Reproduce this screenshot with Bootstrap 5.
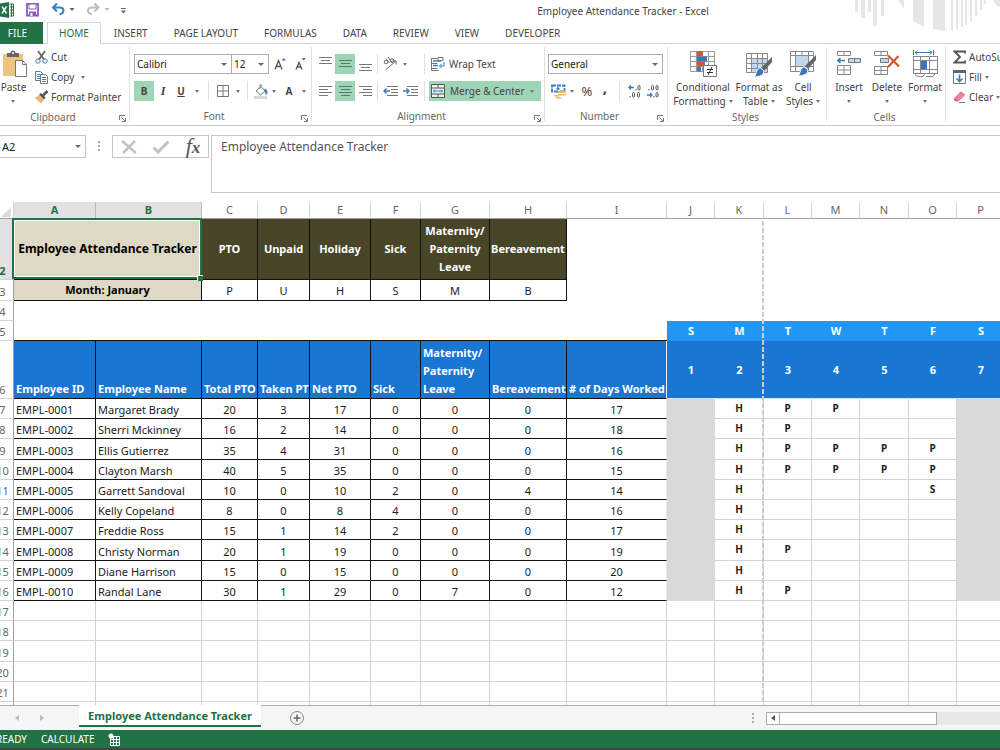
<!DOCTYPE html>
<html lang="en">
<head>
<meta charset="utf-8">
<meta name="viewport" content="width=device-width, initial-scale=1">
<title>Employee Attendance Tracker - Excel</title>
<link href="https://cdn.jsdelivr.net/npm/bootstrap@5.3.0/dist/css/bootstrap.min.css" rel="stylesheet">
<style>
:root{--xl:#217346;--hot:#9fd5b7;--ink:#444;--rule:#d5d5d5}
html,body{height:100%}
body{font:10px/14px "Noto Sans","Open Sans",sans-serif;color:var(--ink);background:#fff;overflow:hidden}
svg{display:block;flex:none}
button{font:inherit;color:inherit;background:none;border:0;padding:0}
/* title bar */
.titlebar{height:22px;flex:none}
.titlebar h1{font:10px/22px "Noto Sans",sans-serif;margin:0;padding-left:116px}
.quick{width:130px}
.deco{right:0;top:0}
/* ribbon tabs */
.rtabs{height:22px;flex:none;border-bottom:1px solid var(--rule)}
.rtabs a{color:var(--ink);text-decoration:none;line-height:20px;padding:0 12px;height:22px;border:1px solid transparent;border-bottom:0}
.rtabs a.file-tab{background:var(--xl);color:#fff;width:43px;padding:0;text-align:center;text-indent:-8px}
.rtabs a.home-tab{color:var(--xl);background:#fff;border-color:var(--rule);margin-left:4px;padding:0 11px}
/* ribbon */
.ribbon{height:82px;flex:none;border-bottom:1px solid #c8c8c8;overflow:hidden}
.rgroup{position:relative;flex:none;display:flex;flex-direction:column}
.rgroup::after{content:"";position:absolute;right:0;top:3px;bottom:4px;border-right:1px solid #e1e1e1}
.rbody{height:65px}
.rlabel{line-height:18px;text-align:center;color:#666;padding-right:14px}
.g-clip{width:130px}.g-clip .rlabel{padding-right:24px}
.g-font{width:182px}.g-align{width:233px}.g-num{width:123px}.g-styles{width:159px}.g-cells{width:119px}.g-edit{width:180px}
.g-styles .rlabel,.g-cells .rlabel{padding-right:4px}
.g-align .rbody,.g-num .rbody,.g-cells .rbody{padding-left:3px}
.g-styles .rbody{padding-left:4px}
.g-edit .rbody{padding-left:7px}
.g-edit .rbody,.cmds{padding-top:3px}
.launch{position:absolute;right:4px;bottom:3px}
.tworows{padding-top:10px;display:flex;flex-direction:column;gap:7px}
.trow{display:flex;height:20px;align-items:center}
.tb{height:20px;display:flex;align-items:center;justify-content:center;flex:none}
.tb.hot{background:var(--hot)}
.w4{width:4px}.w8{width:8px}.w10{width:10px}.w14{width:14px}.w18{width:18px}.w20{width:20px}.w22{width:22px}
.t-ital{font:italic 700 12px "Liberation Serif",serif}
.t-pct{font-size:13px}
.t-comma{font-size:15px;padding-bottom:8px}
.vsep{align-self:stretch;display:flex;justify-content:center;flex:none}
.vsep::before{content:"";border-left:1px solid #e1e1e1}
.caret{width:0;height:0;border:2px solid transparent;border-top:3px solid #777;border-bottom:0;flex:none}
.combo{font:11px/18px "Noto Sans",sans-serif;color:#222;height:20px;border:1px solid #ababab;border-radius:0;padding:0 2px;appearance:none;-webkit-appearance:none;background:#fff url("data:image/svg+xml,%3Csvg xmlns='http://www.w3.org/2000/svg' width='6' height='3'%3E%3Cpath d='M0 0h6L3 3z' fill='%23666'/%3E%3C/svg%3E") no-repeat right 4px center}
.c-face{width:98px}.c-size{width:38px;margin-left:-1px}.c-num{width:115px}
.trow .combo{font-size:10px}
.small-cmd{height:20px;display:flex;align-items:center;gap:3px;white-space:nowrap}
.big{display:flex;flex-direction:column;align-items:center;gap:2px;padding-top:6px;text-align:center;flex:none;white-space:nowrap}
.big svg{height:28px}
.big .line2{height:14px;display:flex;align-items:center;justify-content:center;gap:3px}
.b-cond{width:62px}.b-table{width:50px}.b-cell{width:38px}
.merge{width:112px;background:var(--hot);padding-left:2px;gap:5px;justify-content:flex-start}
/* formula bar */
.fbar{height:76px;flex:none;padding-top:9px}
.namebox{width:86px;height:23px;border:1px solid #c6c6c6;border-left:0;padding:0 2px}
.dots{width:26px;padding-top:6px}
.fbtns{width:97px;height:23px;border:1px solid #c6c6c6}
.fx{font:italic 22px/20px "Liberation Serif",serif;color:#555}
.fx span{font-size:17px;font-weight:700}
.ftext{height:58px;margin-left:2px;border:1px solid #c6c6c6;border-right:0;font:12px/18px "Noto Sans",sans-serif;color:#555;padding:2px 9px;resize:none;border-radius:0;min-width:0}
/* sheet */
.sheetwrap{flex:1 1 0;min-height:0;overflow:hidden;position:relative}
.grid{table-layout:fixed;border-collapse:separate;border-spacing:0;width:1013px;margin-left:-8px;font-size:11px;line-height:18px;color:#1c1c1c}
.grid th,.grid td{padding:0;overflow:hidden;white-space:nowrap;vertical-align:bottom;text-align:center;border:0 solid #d4d4d4;font-weight:400}
.grid thead th{height:17px;line-height:16px;color:#666;border-width:0 1px 1px 0;border-color:#d4d4d4;border-bottom-color:#a0a0a0}
.grid thead th.sel,.grid th.rowsel{background:#e1e1e1;color:var(--xl);font-weight:700}
.grid thead th.sel{border-bottom-color:var(--xl);border-right-color:#bbb}
.grid tbody th{color:#666;border-width:0 1px 1px 0;border-right-color:#a0a0a0;line-height:16px}
.r2{height:61px}.r3{height:21px}.r4,.r5{height:20px}.r6{height:58px}
.rows tr{height:20px;line-height:16px}.rows tr:nth-child(5n+3){height:21px}
.rows td{border-width:0 1px 1px 0}
.grid .bk{border:0 solid #111;border-width:0 1px 1px 0}
.grid .lt{text-align:left;padding-left:2px}
.grid td.tan{background:#ddd9c4;font-weight:700;color:#000;vertical-align:middle}
.grid td.picked{position:relative;overflow:visible;font-size:12px}
.picked::after{content:"";position:absolute;inset:-1px -1px 0 -2px;border:2px solid var(--xl);box-shadow:inset 0 0 0 1px #fff}
.picked i{position:absolute;right:-2px;bottom:-2px;width:6px;height:6px;background:var(--xl);border:1px solid #fff;border-width:1px 0 0 1px;z-index:1}
.grid td.olive{background:#494529;color:#fff;font-weight:700;vertical-align:middle;white-space:normal}
.grid td.blue{background:#1976d2;color:#fff;font-weight:700}
.grid td.wrap2{white-space:normal}
.grid td.sky{background:#2196f3;color:#fff;font-weight:700;vertical-align:middle}
.grid td.topline{border-bottom:1px solid #111}
.grid td.num{background:#1976d2;color:#fff;font-weight:700;vertical-align:middle;border-bottom:1px solid #d4e6f7}
.grid td.att{font-weight:700;vertical-align:top;font-size:10px;line-height:18px}
.grid td.off{background:#d9d9d9;border-color:#d9d9d9}
.grid td.edge{border-right-color:#e8eef5}
.pagebreak{left:762px;top:19px;bottom:2px;width:2px;background:repeating-linear-gradient(#ccc 0 5px,transparent 5px 7px)}
/* sheet tabs and status */
.stabs{height:25px;flex:none;background:#f5f5f5;border-top:1px solid #ababab}
.stab{margin-top:-1px;height:22px;width:182px;background:#fff;border-bottom:2px solid var(--xl);font:700 11px/22px "Noto Sans",sans-serif;color:var(--xl);text-align:center}
.navs{width:79px;padding-left:15px;gap:21px}
.scroller{gap:12px}
.track{width:234px;height:13px;background:#e8e8e8}
.track .step{width:14px;border:1px solid #ababab;background:#fff}
.track .thumb{width:157px;border:1px solid #ababab;border-left-width:0;background:#fff}
.status{height:20px;flex:none;background:var(--xl);color:#fff;border-bottom:2px solid #444;gap:14px;margin-left:-4px}
</style>
</head>
<body class="d-flex flex-column">
<header class="titlebar d-flex position-relative">
  <div class="quick d-flex">
    <svg width="130" height="22" fill="none">
      <path d="M0 3.500 9 2v16l-9-1.500z" fill="#217346"/><path d="M9.500 4h4v12h-4" stroke="#217346" fill="#fff"/><path d="M10 7h3M10 10h3M10 13h3M11.500 4v12" stroke="#217346"/><path d="M2 6.500l4.500 7M6.500 6.500 2 13.500" stroke="#fff" stroke-width="1.500"/>
      <path d="M27 4h11v11.500H27z" stroke="#8e5bb5" stroke-width="1.800"/><path d="M29 4h7v5h-7z" fill="#fff" stroke="#8e5bb5"/><path d="M29 11.500h7v4h-7z" fill="#8e5bb5"/><path d="M30.500 13h2v3h-2z" fill="#fff"/>
      <path d="M57 3.500 53 7.500l4 4M53.500 7.500H60c5 .5 4.500 6-.5 6.800" stroke="#3b7cc0" stroke-width="2"/>
      <path d="M69.500 8h5l-2.500 3z" fill="#666"/>
      <path d="M94.500 3.500l4 4-4 4M98 7.500H91.500c-5 .5-4.500 6 .5 6.800" stroke="#bdbdbd" stroke-width="2"/>
      <path d="M104.500 8h5l-2.500 3z" fill="#bbb"/><path d="M121 8.500h5" stroke="#666"/><path d="M121 10.500h5l-2.500 3z" fill="#666"/>
    </svg>
  </div>
  <h1 class="flex-grow-1 text-center">Employee Attendance Tracker - Excel</h1>
  <svg class="deco position-absolute" width="147" height="32" fill="#e6e6e6">
    <path d="M2 0h3v12H2zM8 0h4v18H8zM15 0h3v12h-3zM20 0h4v26h-4zM28 0h3v16h-3zM45 0h6v9zM60 0h11v27l-11-6zM80 0h12v31l-12-2zM98 0h2v30h-2zM103 0h2v29h-2zM108 0h2v27h-2zM112 0h2v25h-2zM117 0h2v21h-2zM122 0h2v16h-2zM127 0h2v10h-2zM131 0h2v4h-2zM140 0h7v7q-4-1-7-7z"/>
  </svg>
</header>

<nav class="rtabs d-flex">
  <a href="#" class="file-tab">FILE</a><a href="#" class="home-tab">HOME</a><a href="#">INSERT</a><a href="#">PAGE LAYOUT</a><a href="#">FORMULAS</a><a href="#">DATA</a><a href="#">REVIEW</a><a href="#">VIEW</a><a href="#">DEVELOPER</a>
</nav>

<section class="ribbon d-flex">
  <div class="rgroup g-clip">
    <div class="rbody d-flex">
      <button class="big pe-2">
        <svg width="27" height="28" fill="none"><path d="M3 4h20v22H3z" fill="#edc47e"/><path d="M7 3h3.500q0-2.500 2.500-2.500T15.500 3H19v4H7z" fill="#666"/><circle cx="13" cy="3" r="1" fill="#fff"/><path d="M15.500 10.500h7l4 4v12h-11z" fill="#fff" stroke="#777"/><path d="M22.500 10.500v4h4" stroke="#777"/></svg>
        <span>Paste<span class="line2"><i class="caret"></i></span></span>
      </button>
      <div class="cmds">
        <button class="small-cmd"><svg width="13" height="14" fill="none"><path d="M3 1l6 8.500M10 1 4 9.500" stroke="#666" stroke-width="1.800"/><circle cx="3" cy="11" r="2.200" stroke="#3b7cc0"/><circle cx="10" cy="11" r="2.200" stroke="#3b7cc0"/></svg>Cut</button>
        <button class="small-cmd"><svg width="13" height="14" fill="none"><path d="M.5 1.500h5l2 2v7h-7z" fill="#fff" stroke="#777"/><path d="M2 4.500h3M2 6.500h3M2 8.500h3" stroke="#3b7cc0"/><path d="M5.500 4.500h5l2 2v7h-7z" fill="#fff" stroke="#777"/><path d="M7 7.500h4M7 9.500h4M7 11.500h4" stroke="#3b7cc0"/></svg>Copy<i class="caret ms-1"></i></button>
        <button class="small-cmd"><svg width="13" height="14" fill="none"><path d="M0 8l4-3 5 5-3 3.500z" fill="#edb868"/><path d="M4 4.500 6 3l4.500 4.500L9 9.500z" fill="#555"/><path d="M8 5.500 12.500 1" stroke="#555" stroke-width="2.500"/></svg>Format Painter</button>
      </div>
    </div>
    <div class="rlabel">Clipboard</div>
    <svg class="launch" width="7" height="7" fill="none" stroke="#777"><path d="M.5 5V.5H6M2.500 2.500l3.500 3.500M6.500 3v3.500H3"/></svg>
  </div>

  <div class="rgroup g-font">
    <div class="rbody tworows ps-1">
      <div class="trow">
        <select class="combo c-face" aria-label="Font"><option>Calibri</option></select><select class="combo c-size" aria-label="Font size"><option>12</option></select>
        <button class="tb w22" aria-label="Grow font"><svg width="14" height="14" fill="none"><path d="M2 12.500 5.500 3.500 9 12.500M3.200 9.500h4.600" stroke="#555" stroke-width="1.300"/><path d="M8.500 3.500h4.500L10.700 1z" fill="#3b7cc0"/></svg></button>
        <button class="tb w18" aria-label="Shrink font"><svg width="14" height="14" fill="none"><path d="M3 12.500 6 5.500 9 12.500M4 10h4" stroke="#555" stroke-width="1.300"/><path d="M8.500 1h4.500l-2.300 2.500z" fill="#3b7cc0"/></svg></button>
      </div>
      <div class="trow">
        <button class="tb w20 hot fw-bold">B</button><button class="tb w18 t-ital">I</button><button class="tb w18 text-decoration-underline fw-bold">U</button><span class="tb w14"><i class="caret"></i></span><span class="vsep w8"></span>
        <button class="tb w22" aria-label="Borders"><svg width="13" height="13" fill="none" stroke="#777"><path d="M.5.5h11v11H.5zM6 .5v11M.5 6h11"/></svg></button><span class="tb w8"><i class="caret"></i></span><span class="vsep w10"></span>
        <button class="tb w18" aria-label="Fill color"><svg width="15" height="15" fill="none"><path d="M0 12h13v3H0z" fill="#d9d9d9"/><path d="M2 7l5-4.500 4 4.500-4.500 4z" stroke="#777" fill="#fff"/><path d="M6 5V1q1.500-1 2 1" stroke="#777"/><path d="M10.500 4.500q3 .5 3 5l-2 1.500q0-3-1-4z" fill="#3b7cc0"/></svg></button><span class="tb w8"><i class="caret"></i></span>
        <button class="tb w22 fw-bold">A</button><span class="tb w8"><i class="caret"></i></span>
      </div>
    </div>
    <div class="rlabel">Font</div>
    <svg class="launch" width="7" height="7" fill="none" stroke="#777"><path d="M.5 5V.5H6M2.500 2.500l3.500 3.500M6.500 3v3.500H3"/></svg>
  </div>

  <div class="rgroup g-align">
    <div class="rbody tworows">
      <div class="trow">
        <button class="tb w20" aria-label="Top align"><svg width="13" height="14" stroke="#777"><path d="M0 .5h13M2 3.500h9M0 6.500h13"/></svg></button><button class="tb w20 hot" aria-label="Middle align"><svg width="13" height="14" stroke="#557a66"><path d="M0 3.500h13M2 6.500h9M0 9.500h13"/></svg></button><button class="tb w20" aria-label="Bottom align"><svg width="13" height="14" stroke="#777"><path d="M0 7.500h13M2 10.500h9M0 13.500h13"/></svg></button><span class="vsep w4"></span>
        <button class="tb w22" aria-label="Orientation"><svg width="16" height="16" fill="none" stroke="#666"><circle cx="4" cy="6" r="1.800"/><path d="M4 2.500 7.500 7M6 1l4.500 6"/><circle cx="10" cy="4.500" r="1.800"/><path d="M4 13.500 14 5M14 8.500V5h-3.500"/></svg></button><span class="tb w8"><i class="caret"></i></span><span class="tb w10"></span><span class="vsep w10"></span>
        <button class="tb gap-1"><span class="w4 d-none"></span><svg width="16" height="14" fill="none"><path d="M2.500 1v12.500M2.500 1.500h6M2.500 6.500h6M2.500 11.500h6M9 .5v3h5v-3zM2.500 13.500h7" stroke="#777"/><path d="M4 4h8M4 8.500h5" stroke="#3b7cc0" stroke-width="1.500"/><path d="M15 5v4h-4.500M12.500 7l-2 2 2 2" stroke="#3b7cc0"/></svg>Wrap Text</button>
      </div>
      <div class="trow">
        <button class="tb w20" aria-label="Align left"><svg width="13" height="12" stroke="#777"><path d="M0 1.500h13M0 4.500h9M0 7.500h13M0 10.500h9"/></svg></button><button class="tb w20 hot" aria-label="Center"><svg width="13" height="12" stroke="#557a66"><path d="M0 1.500h13M2 4.500h9M0 7.500h13M2 10.500h9"/></svg></button><button class="tb w20" aria-label="Align right"><svg width="13" height="12" stroke="#777"><path d="M0 1.500h13M4 4.500h9M0 7.500h13M4 10.500h9"/></svg></button><span class="vsep w4"></span>
        <button class="tb w22" aria-label="Decrease indent"><svg width="15" height="12" fill="none"><path d="M4 1.500h11M8 4.500h7M8 7.500h7M4 10.500h11" stroke="#777"/><path d="M1 6h6M3.500 3.500 1 6l2.500 2.500" stroke="#3b7cc0" stroke-width="1.500"/></svg></button><button class="tb w18" aria-label="Increase indent"><svg width="15" height="12" fill="none"><path d="M4 1.500h11M8 4.500h7M8 7.500h7M4 10.500h11" stroke="#777"/><path d="M0 6h6M3.500 3.500 6 6 3.500 8.500" stroke="#3b7cc0" stroke-width="1.500"/></svg></button><span class="vsep w10"></span>
        <button class="tb merge"><svg width="14" height="14" fill="none"><path d="M.5.5h13v13H.5zM.5 4h13M.5 10h13M7 .5V4M7 10v3.500" stroke="#555" fill="#e9f5ee"/><path d="M2.500 7h9M4 5.500 2.500 7 4 8.500M10 5.500 11.500 7 10 8.500" stroke="#3b7cc0"/></svg>Merge &amp; Center<i class="caret"></i></button>
      </div>
    </div>
    <div class="rlabel">Alignment</div>
    <svg class="launch" width="7" height="7" fill="none" stroke="#777"><path d="M.5 5V.5H6M2.500 2.500l3.500 3.500M6.500 3v3.500H3"/></svg>
  </div>

  <div class="rgroup g-num">
    <div class="rbody tworows">
      <div class="trow"><select class="combo c-num" aria-label="Number format"><option>General</option></select></div>
      <div class="trow">
        <button class="tb w20" aria-label="Accounting format"><svg width="15" height="15" fill="none"><path d="M1 1.500h12.500v6H1z" stroke="#3b7cc0" stroke-width="1.800" stroke-dasharray="4 1"/><circle cx="7" cy="4.500" r="1.500" fill="#3b7cc0"/><path d="M7 7h8v2H7zM7 10h8v1.500H7zM3 11h5v1.500H3zM5 13h5v1.500H5z" fill="#edb868"/></svg></button><span class="tb w8"><i class="caret"></i></span><button class="tb w22 t-pct">%</button><button class="tb w14 fw-bold t-comma">,</button><span class="vsep w14"></span>
        <button class="tb w18" aria-label="Increase decimal"><svg width="14" height="14" fill="none" stroke="#555"><path d="M1 3.500h5M3 1.500l-2 2 2 2" stroke="#3b7cc0" stroke-width="1.300"/><path d="M8 5v1.500M2 12v1.500"/><rect x="10" y="1.500" width="2" height="4.500" rx="1"/><rect x="4.500" y="8.500" width="2" height="4.500" rx="1"/><rect x="9.500" y="8.500" width="2" height="4.500" rx="1"/></svg></button><button class="tb w18" aria-label="Decrease decimal"><svg width="14" height="14" fill="none" stroke="#555"><path d="M1 11h5M4 9l2 2-2 2" stroke="#3b7cc0" stroke-width="1.300"/><path d="M3 5v1.500M8 12v1.500"/><rect x="5.500" y="1.500" width="2" height="4.500" rx="1"/><rect x="10" y="1.500" width="2" height="4.500" rx="1"/><rect x="10" y="8.500" width="2" height="4.500" rx="1"/></svg></button>
      </div>
    </div>
    <div class="rlabel">Number</div>
    <svg class="launch" width="7" height="7" fill="none" stroke="#777"><path d="M.5 5V.5H6M2.500 2.500l3.500 3.500M6.500 3v3.500H3"/></svg>
  </div>

  <div class="rgroup g-styles">
    <div class="rbody d-flex">
      <button class="big b-cond"><svg width="27" height="28" fill="none"><path d="M.5 1.500h24v20H.5z" fill="#fff"/><path d="M.5 1.500h24v20H.5zM.5 6.500h24M.5 11.500h24M.5 16.500h24M6.500 1.500v20M12.500 1.500v20M18.500 1.500v20" stroke="#999"/><path d="M7 1h5.500v5H7zM7 12h8v4H7z" fill="#d65532"/><path d="M7 6.500h10v5H7zM7 16.500h4v5H7z" fill="#3a76b8"/><path d="M13.500 15.500h13v11h-13z" fill="#fff" stroke="#777"/><path d="M17 19.500h6M17 22.500h6M22 17l-4 8" stroke="#333"/></svg><span>Conditional<span class="line2">Formatting<i class="caret"></i></span></span></button>
      <button class="big b-table"><svg width="27" height="28" fill="none"><path d="M.5 3.500h21v19H.5z" fill="#fff"/><path d="M6 8h15v14H6z" fill="#c1d7ec"/><path d="M.5 3.500h21v19H.5zM.5 8.500h21M.5 13.500h21M.5 18.500h21M5.500 3.500v19M11.500 3.500v19M16.500 3.500v19" stroke="#888"/><path d="M26 7v5l-8 9-3-3z" fill="#666"/><path d="M14 17.500l4 3.500q0 6-11 6 3-1 3-4t4-5.500z" fill="#3a76b8" stroke="#fff"/></svg><span>Format as<span class="line2">Table<i class="caret"></i></span></span></button>
      <button class="big b-cell"><svg width="27" height="28" fill="none"><path d="M.5 1.500h23v20H.5z" fill="#fff"/><path d="M6 6h12v10H6z" fill="#c1d7ec"/><path d="M.5 1.500h23v20H.5zM.5 5.500h23M.5 16.500h23M5.500 1.500v20M18.500 1.500v20M12 1.500v4" stroke="#888"/><path d="M26 5v5l-8 9-3-3z" fill="#666"/><path d="M14 16.500l4 3.500q0 6-11 6 3-1 3-4t4-5.500z" fill="#3a76b8" stroke="#fff"/></svg><span>Cell<span class="line2">Styles<i class="caret"></i></span></span></button>
    </div>
    <div class="rlabel">Styles</div>
  </div>

  <div class="rgroup g-cells">
    <div class="rbody d-flex">
      <button class="big b-cell"><svg width="24" height="28" fill="none"><path d="M.5 1.500h13v4H.5zM7 1.500v4M.5 15.500h13v9H.5zM7 15.500v9M.5 20h13" stroke="#888"/><path d="M11.500 8.500h12v4h-12z" fill="#c1d7ec" stroke="#777"/><path d="M17.500 8.500v4" stroke="#777"/><path d="M1 10.500h7M3.500 8 1 10.500 3.500 13" stroke="#3b7cc0" stroke-width="1.600"/></svg><span>Insert<span class="line2"><i class="caret"></i></span></span></button>
      <button class="big b-cell"><svg width="26" height="28" fill="none"><path d="M.5 1.500h13v4H.5zM7 1.500v4M.5 16.500h13v8H.5zM7 16.500v8M.5 20.500h13" stroke="#888"/><path d="M6.500 8.500h8v4h-8z" fill="#c1d7ec" stroke="#777"/><path d="M14 5.500l11 11M24.500 6 14 17" stroke="#d65532" stroke-width="2.200"/></svg><span>Delete<span class="line2"><i class="caret"></i></span></span></button>
      <button class="big b-cell"><svg width="25" height="28" fill="none"><path d="M.5 6.500h24v17H.5z" fill="#fff"/><path d="M.5 6.500h24v17H.5zM.5 10.500h24M.5 19.500h24M7.500 6.500v17M16.500 6.500v17M2 23.500q0 3 4 3h4l2-3M13 26.500h7l2-3" stroke="#888"/><path d="M8 11h6v8H8z" fill="#3a76b8"/><path d="M.5 0v5M20.500 0v5M2 2.500h17M4.500.5 2 2.500l2.500 2M16.500.5l2.500 2-2.500 2" stroke="#3b7cc0"/></svg><span>Format<span class="line2"><i class="caret"></i></span></span></button>
    </div>
    <div class="rlabel">Cells</div>
  </div>

  <div class="rgroup g-edit">
    <div class="rbody">
      <button class="small-cmd"><svg width="13" height="14" fill="none"><path d="M12 3.500V1.500H1.500L7 7l-5.500 5.500H12v-2" stroke="#555" stroke-width="1.900"/></svg>AutoSum<i class="caret"></i></button>
      <button class="small-cmd"><svg width="13" height="14" fill="none"><path d="M.5.500h12v13H.5z" stroke="#777" fill="#fff"/><path d="M0 0h13v3H0z" fill="#666"/><path d="M6.500 4.500v7M3.500 8.500l3 3 3-3" stroke="#3b7cc0" stroke-width="1.600"/></svg>Fill<i class="caret"></i></button>
      <button class="small-cmd"><svg width="13" height="14" fill="none"><path d="M1 8 7 2q1-1 2 0l2.500 2q.8 1 0 2L6 11H3z" fill="#e8829a"/><path d="M1 8l4.500 3.500H3L1 10z" fill="#c9607c"/><path d="M6 12.500h6" stroke="#777"/></svg>Clear<i class="caret"></i></button>
    </div>
    <div class="rlabel">Editing</div>
  </div>
</section>

<section class="fbar d-flex align-items-start">
  <input class="namebox combo" value="A2" aria-label="Name box">
  <div class="dots d-flex justify-content-center"><svg width="3" height="11" fill="#aaa"><path d="M0 0h2v2H0zM0 4h2v2H0zM0 8h2v2H0z"/></svg></div>
  <div class="fbtns d-flex align-items-center justify-content-around">
    <button aria-label="Cancel"><svg width="16" height="14" stroke="#c3c3c3" stroke-width="2.500"><path d="M1 1l14 12M14 1 2 13"/></svg></button>
    <button aria-label="Enter"><svg width="18" height="14" fill="none" stroke="#c3c3c3" stroke-width="3"><path d="M1.500 7.500 6 12 16.500 1.500"/></svg></button>
    <button class="fx" aria-label="Insert function">f<span>x</span></button>
  </div>
  <textarea class="ftext flex-grow-1" aria-label="Formula">Employee Attendance Tracker</textarea>
</section>

<main class="sheetwrap">
  <table class="grid">
    <colgroup id="cols"></colgroup>
    <thead><tr id="letters"></tr></thead>
    <tbody>
      <tr class="r2"><th class="rowsel">2</th><td colspan="2" class="tan bk picked">Employee Attendance Tracker<i></i></td><td class="olive bk">PTO</td><td class="olive bk">Unpaid</td><td class="olive bk">Holiday</td><td class="olive bk">Sick</td><td class="olive bk">Maternity/ Paternity Leave</td><td class="olive bk">Bereavement</td><td colspan="8"></td></tr>
      <tr class="r3"><th>3</th><td colspan="2" class="tan bk">Month: January</td><td class="bk">P</td><td class="bk">U</td><td class="bk">H</td><td class="bk">S</td><td class="bk">M</td><td class="bk">B</td><td colspan="8"></td></tr>
      <tr class="r4"><th>4</th><td colspan="16"></td></tr>
      <tr class="r5"><th>5</th><td colspan="9" class="topline"></td><td class="sky">S</td><td class="sky">M</td><td class="sky">T</td><td class="sky">W</td><td class="sky">T</td><td class="sky">F</td><td class="sky">S</td></tr>
      <tr class="r6"><th>6</th><td class="blue bk lt">Employee ID</td><td class="blue bk lt">Employee Name</td><td class="blue bk lt">Total PTO</td><td class="blue bk lt">Taken PT</td><td class="blue bk lt">Net PTO</td><td class="blue bk lt">Sick</td><td class="blue bk lt wrap2">Maternity/ Paternity Leave</td><td class="blue bk lt">Bereavement</td><td class="blue bk lt edge"># of Days Worked</td><td class="num">1</td><td class="num">2</td><td class="num">3</td><td class="num">4</td><td class="num">5</td><td class="num">6</td><td class="num">7</td></tr>
    </tbody>
    <tbody class="rows" id="rows"></tbody>
  </table>
  <div class="pagebreak position-absolute"></div>
</main>

<footer class="stabs d-flex">
  <div class="navs d-flex align-items-center"><svg width="4" height="6" fill="#bbb"><path d="M4 0v6L0 3z"/></svg><svg width="4" height="6" fill="#bbb"><path d="M0 0v6l4-3z"/></svg></div>
  <button class="stab">Employee Attendance Tracker</button>
  <button class="ms-4 ps-1" aria-label="New sheet"><svg width="16" height="16" fill="none"><circle cx="8" cy="8" r="6.500" stroke="#888"/><path d="M8 4.500v7M4.500 8h7" stroke="#666" stroke-width="1.500"/></svg></button>
  <div class="ms-auto d-flex align-items-center scroller"><svg width="3" height="11" fill="#aaa"><path d="M1 0h2v2H1zM1 4h2v2H1zM1 8h2v2H1z"/></svg>
    <div class="track d-flex"><button class="step d-flex align-items-center justify-content-center" aria-label="Scroll left"><svg width="4" height="6" fill="#555"><path d="M4 0v6L0 3z"/></svg></button><div class="thumb"></div></div>
  </div>
</footer>
<div class="status d-flex align-items-center"><span>READY</span><span>CALCULATE</span>
  <svg width="12" height="13" fill="none"><path d="M2.500 3.500h9v9h-9z" stroke="#fff"/><path d="M2.500 6.500h9M2.500 9.500h9M5.500 4v9M8.500 4v9" stroke="#fff"/><circle cx="3" cy="3" r="2.500" fill="#fff"/></svg>
</div>

<script src="https://cdn.jsdelivr.net/npm/bootstrap@5.3.0/dist/js/bootstrap.bundle.min.js"></script>
<script>
const widths=[22,82,106,56,52,61,50,69,77,100,48,49,48,48,49,48,48];
document.getElementById('cols').innerHTML=widths.map(w=>`<col style="width:${w}px">`).join('');
document.getElementById('letters').innerHTML='<th><svg class="ms-auto" width="12" height="12" fill="#dcdcdc"><path d="M10 1v10H0z"/></svg></th>'+[...'ABCDEFGHIJKLMNOP'].map(c=>`<th${c<'C'?' class="sel"':''}>${c}</th>`).join('');
// name, seven counts, marks for days 1-7 (- is a day off)
const staff=[
 ['Margaret Brady',20,3,17,0,0,0,17,'-HPP  -'],['Sherri Mckinney',16,2,14,0,0,0,18,'-HP   -'],
 ['Ellis Gutierrez',35,4,31,0,0,0,16,'-HPPPP-'],['Clayton Marsh',40,5,35,0,0,0,15,'-HPPPP-'],
 ['Garrett Sandoval',10,0,10,2,0,4,14,'-H   S-'],['Kelly Copeland',8,0,8,4,0,0,16,'-H    -'],
 ['Freddie Ross',15,1,14,2,0,0,17,'-H    -'],['Christy Norman',20,1,19,0,0,0,19,'-HP   -'],
 ['Diane Harrison',15,0,15,0,0,0,20,'-H    -'],['Randal Lane',30,1,29,0,7,0,12,'-HP   -']];
let html=staff.map((s,i)=>{
  const counts=s.slice(1,8).map((v,k)=>`<td class="bk${k==6?' edge':''}">${v}</td>`).join('');
  const days=[...s[8]].map(d=>d=='-'?'<td class="off"></td>':`<td class="att">${d.trim()}</td>`).join('');
  return `<tr><th>${i+7}</th><td class="bk lt">EMPL-${String(i+1).padStart(4,'0')}</td><td class="bk lt">${s[0]}</td>${counts}${days}</tr>`;
}).join('');
for(let r=17;r<23;r++) html+=`<tr><th>${r}</th>${'<td></td>'.repeat(16)}</tr>`;
document.getElementById('rows').innerHTML=html;
</script>
</body>
</html>
